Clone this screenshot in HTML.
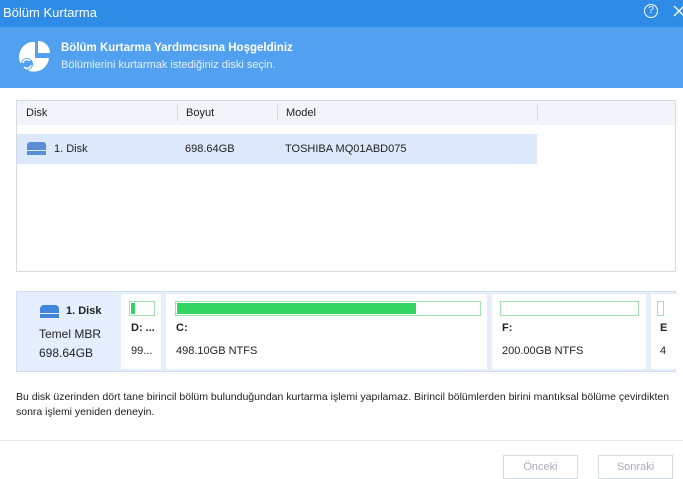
<html><head><style>
body{margin:0;width:683px;height:476px;overflow:hidden;background:#fff;font-family:"Liberation Sans",sans-serif;font-size:11px;color:#222;position:relative}
div{position:absolute;box-sizing:border-box}
.t{white-space:nowrap}
</style></head><body>
<div style="left:0;top:0;width:683px;height:27px;background:#2e8be6"></div>
<div class="t" style="left:3px;top:5px;color:#fff;font-size:13px">Bölüm Kurtarma</div>
<div style="left:644px;top:4px;width:14px;height:14px;border:1.3px solid #fff;border-radius:50%;color:#fff;font-size:10px;text-align:center;line-height:12px">?</div>
<svg style="position:absolute;left:673px;top:5px" width="12" height="12"><path d="M1 1L11 11M11 1L1 11" stroke="#fff" stroke-width="1.3"/></svg>
<div style="left:0;top:27px;width:683px;height:61px;background:#52a1f0"></div>
<svg style="position:absolute;left:18px;top:40px" width="34" height="32"><path d="M13 2A15 15 0 1 0 31 18L17 18L17 2Z" fill="#fff"/><path d="M20 1A12 12 0 0 1 32 13L20 13Z" fill="#fff"/><circle cx="9" cy="24" r="6" fill="#52a1f0"/><path d="M5 23a4 4 0 0 1 7-2M13 25a4 4 0 0 1-7 2" stroke="#fff" stroke-width="1.5" fill="none"/></svg>
<div class="t" style="left:61px;top:42px;color:#fff;font-weight:bold;font-size:11.5px">Bölüm Kurtarma Yardımcısına Hoşgeldiniz</div>
<div class="t" style="left:61px;top:59px;color:#e6f0ff;font-size:11px">Bölümlerini kurtarmak istediğiniz diski seçin.</div>
<div style="left:16px;top:100px;width:660px;height:172px;border:1px solid #d5dbe3"></div>
<div style="left:17px;top:101px;width:658px;height:24px;background:#f1f4f9"></div>
<div style="left:177px;top:105px;width:1px;height:16px;background:#d5d9e0"></div>
<div style="left:277px;top:105px;width:1px;height:16px;background:#d5d9e0"></div>
<div style="left:537px;top:105px;width:1px;height:16px;background:#d5d9e0"></div>
<div class="t" style="left:26px;top:107px">Disk</div>
<div class="t" style="left:186px;top:107px">Boyut</div>
<div class="t" style="left:286px;top:107px">Model</div>
<div style="left:17px;top:134px;width:520px;height:30px;background:#dce9fb"></div>
<div style="left:27px;top:142px;width:19px;height:8px;background:#5a8fd6;border-radius:3px 3px 0 0"></div>
<div style="left:27px;top:151px;width:19px;height:4px;background:#5a8fd6"></div>
<div class="t" style="left:54px;top:143px">1. Disk</div>
<div class="t" style="left:185px;top:143px">698.64GB</div>
<div class="t" style="left:285px;top:143px">TOSHIBA MQ01ABD075</div>
<div style="left:16px;top:291px;width:660px;height:81px;background:#e4eefc;border:1px solid #d0def2"></div>
<div style="left:40px;top:305px;width:19px;height:8px;background:#3f86dc;border-radius:4px 4px 0 0"></div>
<div style="left:40px;top:314px;width:19px;height:4px;background:#3f86dc"></div>
<div class="t" style="left:66px;top:305px;font-weight:bold">1. Disk</div>
<div class="t" style="left:39px;top:327px;font-size:12px">Temel MBR</div>
<div class="t" style="left:39px;top:346px;font-size:12px">698.64GB</div>
<div style="left:121px;top:294px;width:40px;height:75px;background:#fff"></div>
<div style="left:129px;top:301px;width:26px;height:15px;border:1px solid #9fe3b0"><div style="left:1px;top:1px;width:4px;height:11px;background:#34d463"></div></div>
<div class="t" style="left:131px;top:322px;font-weight:bold">D: ...</div>
<div class="t" style="left:131px;top:345px">99...</div>
<div style="left:166px;top:294px;width:321px;height:75px;background:#fff"></div>
<div style="left:175px;top:301px;width:306px;height:15px;border:1px solid #9fe3b0"><div style="left:1px;top:1px;width:239px;height:11px;background:#34d463"></div></div>
<div class="t" style="left:176px;top:322px;font-weight:bold">C:</div>
<div class="t" style="left:176px;top:345px">498.10GB NTFS</div>
<div style="left:492px;top:294px;width:154px;height:75px;background:#fff"></div>
<div style="left:500px;top:301px;width:139px;height:15px;border:1px solid #9fe3b0"></div>
<div class="t" style="left:502px;top:322px;font-weight:bold">F:</div>
<div class="t" style="left:502px;top:345px">200.00GB NTFS</div>
<div style="left:651px;top:294px;width:25px;height:75px;background:#fff"></div>
<div style="left:657px;top:301px;width:7px;height:15px;border:1px solid #9fe3b0"></div>
<div class="t" style="left:660px;top:322px;font-weight:bold">E</div>
<div class="t" style="left:660px;top:345px">4</div>
<div class="t" style="left:16px;top:391px;font-size:10.5px">Bu disk üzerinden dört tane birincil bölüm bulunduğundan kurtarma işlemi yapılamaz. Birincil bölümlerden birini mantıksal bölüme çevirdikten</div>
<div class="t" style="left:16px;top:406px;font-size:10.5px">sonra işlemi yeniden deneyin.</div>
<div style="left:0;top:440px;width:683px;height:1px;background:#e3e6ea"></div>
<div style="left:503px;top:455px;width:75px;height:24px;border:1px solid #d5dbe3;color:#aab;text-align:center;line-height:22px">Önceki</div>
<div style="left:598px;top:455px;width:75px;height:24px;border:1px solid #d5dbe3;color:#aab;text-align:center;line-height:22px">Sonraki</div>
</body></html>
